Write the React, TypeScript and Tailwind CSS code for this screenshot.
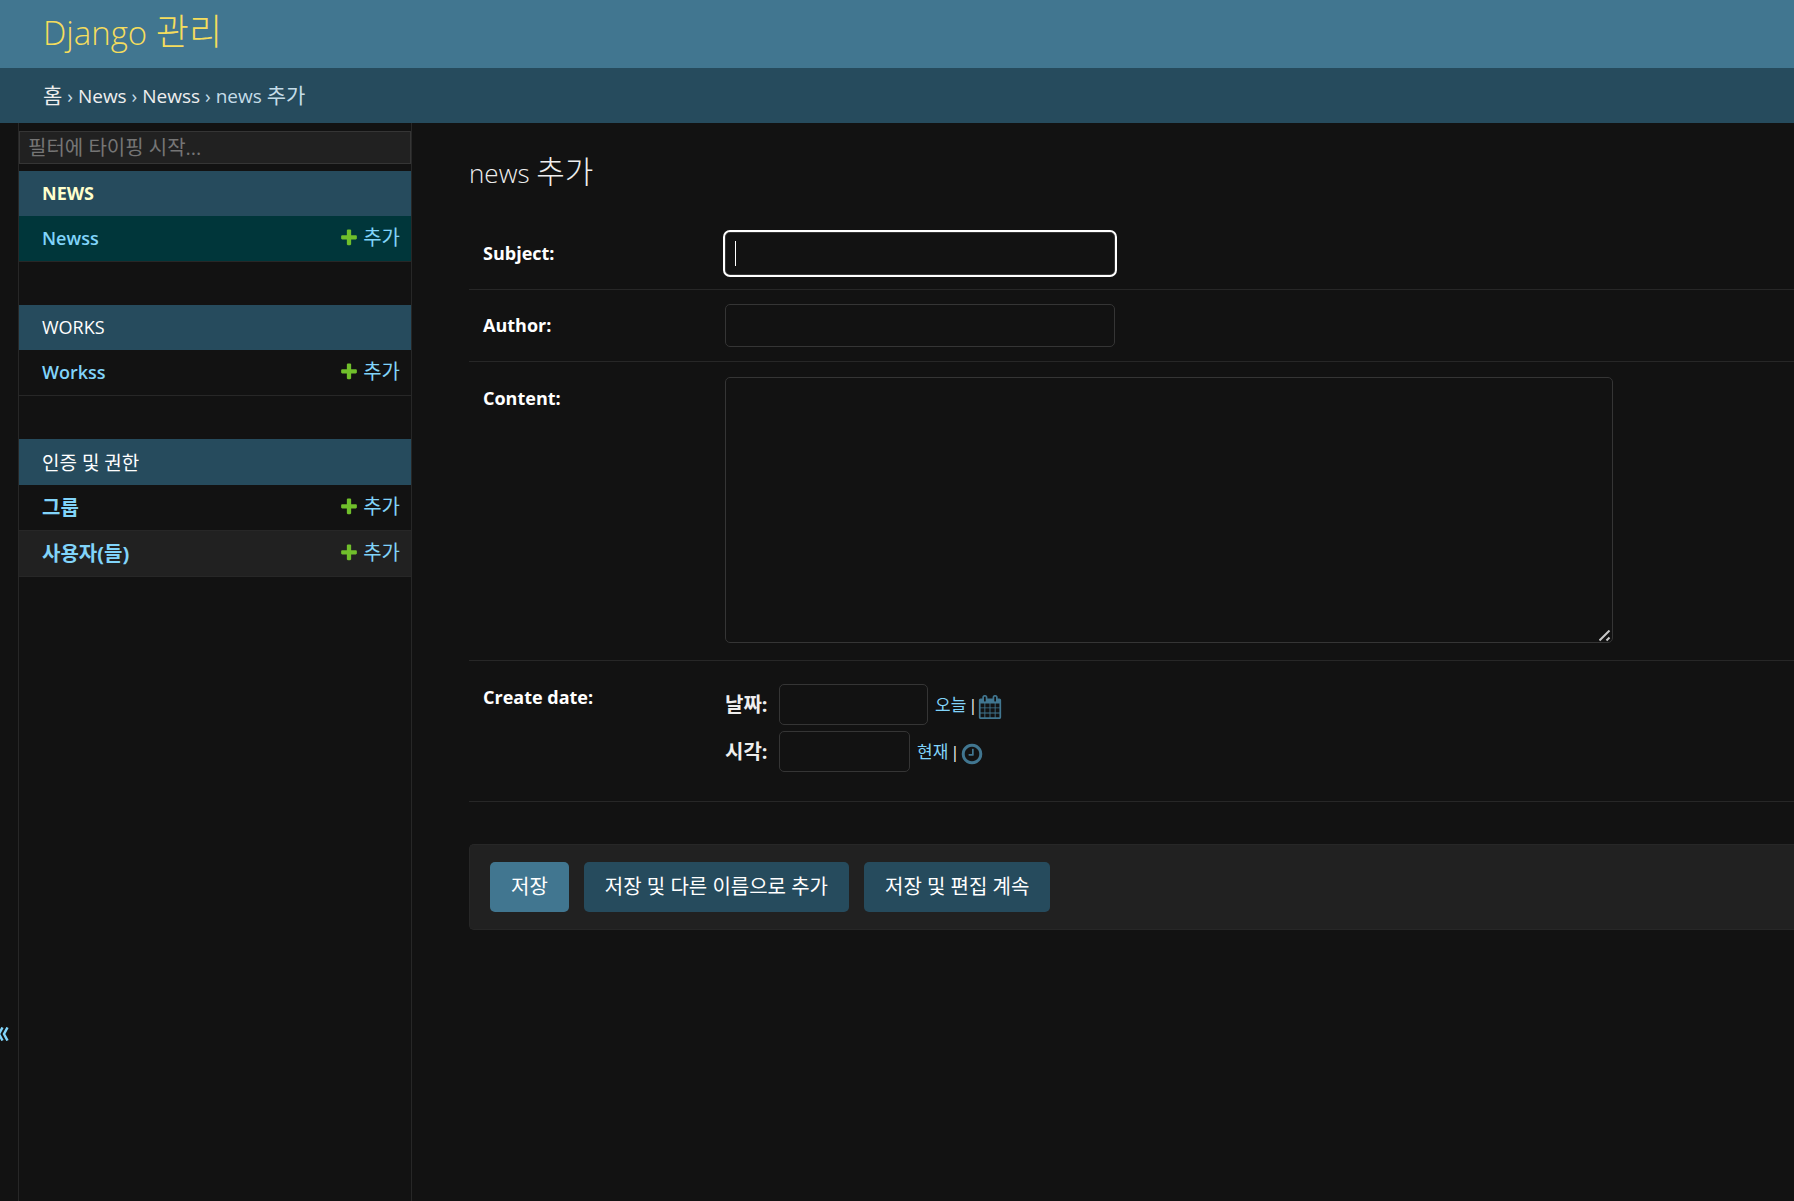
import clsx from 'clsx';

const ADD_PATH =
  'M1600 736v192q0 40-28 68t-68 28h-416v416q0 40-28 68t-68 28h-192q-40 0-68-28t-28-68v-416h-416q-40 0-68-28t-28-68v-192q0-40 28-68t68-28h416v-416q0-40 28-68t68-28h192q40 0 68 28t28 68v416h416q40 0 68 28t28 68z';
const CALENDAR_PATH =
  'M192 1664h288v-288h-288v288zm352 0h320v-288h-320v288zm-352-352h288v-320h-288v320zm352 0h320v-320h-320v320zm-352-384h288v-288h-288v288zm736 736h320v-288h-320v288zm-384-736h320v-288h-320v288zm768 736h288v-288h-288v288zm-384-352h320v-320h-320v320zm-352-864v-288q0-13-9.5-22.5t-22.5-9.5h-64q-13 0-22.5 9.5t-9.5 22.5v288q0 13 9.5 22.5t22.5 9.5h64q13 0 22.5-9.5t9.5-22.5zm736 864h288v-320h-288v320zm-384-384h320v-288h-320v288zm384 0h288v-288h-288v288zm32-480v-288q0-13-9.5-22.5t-22.5-9.5h-64q-13 0-22.5 9.5t-9.5 22.5v288q0 13 9.5 22.5t22.5 9.5h64q13 0 22.5-9.5t9.5-22.5zm384-64v1280q0 52-38 90t-90 38h-1408q-52 0-90-38t-38-90v-1280q0-52 38-90t90-38h128v-96q0-66 47-113t113-47h64q66 0 113 47t47 113v96h384v-96q0-66 47-113t113-47h64q66 0 113 47t47 113v96h128q52 0 90 38t38 90z';
const CLOCK_PATH =
  'M1024 544v448q0 14-9 23t-23 9h-320q-14 0-23-9t-9-23v-64q0-14 9-23t23-9h224v-352q0-14 9-23t23-9h64q14 0 23 9t9 23zm416 352q0-148-73-273t-198-198-273-73-273 73-198 198-73 273 73 273 198 198 273 73 273-73 198-198 73-273zm224 0q0 209-103 385.5t-279.5 279.5-385.5 103-385.5-103-279.5-279.5-103-385.5 103-385.5 279.5-279.5 385.5-103 385.5 103 279.5 279.5 103 385.5z';

interface Model {
  name: string;
  korean?: boolean;
  current?: boolean;
  striped?: boolean;
}

interface AppGroup {
  name: string;
  korean?: boolean;
  current?: boolean;
  models: Model[];
}

const apps: AppGroup[] = [
  { name: 'NEWS', current: true, models: [{ name: 'Newss', current: true }] },
  { name: 'WORKS', models: [{ name: 'Workss' }] },
  {
    name: '인증 및 권한',
    korean: true,
    models: [
      { name: '그룹', korean: true },
      { name: '사용자(들)', korean: true, striped: true },
    ],
  },
];

function Icon({ path, className }: { path: string; className: string }) {
  return (
    <svg viewBox="0 0 1792 1792" fill="currentColor" aria-hidden="true" className={className}>
      <path d={path} />
    </svg>
  );
}

function AppTable({ app }: { app: AppGroup }) {
  return (
    <table className="mb-[43px] w-full border-separate border-spacing-0">
      <caption
        className={clsx(
          'bg-[#264b5d] pl-[23px] text-left',
          app.korean ? 'h-[46px] text-[19px] leading-[48px]' : 'h-[45px] text-[18px] leading-[45px]',
        )}
      >
        <a href="#" className={app.current ? 'font-bold text-[#ffffcc]' : 'text-white'}>
          {app.name}
        </a>
      </caption>
      <tbody>
        {app.models.map((model) => (
          <tr
            key={model.name}
            className={clsx(model.current && 'bg-[#00363a]', model.striped && 'bg-[#212121]')}
          >
            <th
              scope="row"
              className={clsx(
                'h-[46px] border-b border-[#272727] py-0 pl-[23px] text-left',
                model.korean ? 'text-[20px] font-bold' : 'text-[18px] font-semibold',
              )}
            >
              <a href="#">{model.name}</a>
            </th>
            <td className="h-[46px] border-b border-[#272727] pt-0 pr-[11px] pb-[2px] text-[20px]">
              <a href="#" className="flex items-center justify-end gap-1">
                <Icon path={ADD_PATH} className="size-5 text-[#70bf2b]" />
                추가
              </a>
            </td>
          </tr>
        ))}
      </tbody>
    </table>
  );
}

function Sidebar() {
  return (
    <nav aria-label="Sidebar" className="w-[393px] shrink-0 border-r border-[#272727] text-[#81d4fa]">
      <input
        type="search"
        aria-label="필터"
        placeholder="필터에 타이핑 시작..."
        className="mt-2 mb-[7px] block h-[33px] w-full border border-[#353535] bg-[#212121] px-2 text-[20px] text-[#eeeeee] placeholder:text-[#757575]"
      />
      {apps.map((app) => (
        <AppTable key={app.name} app={app} />
      ))}
    </nav>
  );
}

const fieldClass = 'block rounded-[5px] border border-[#353535] bg-[#121212] px-2 text-[18px] text-[#eeeeee]';
const rowClass = 'flex border-b border-[#272727] pl-[14px]';
const labelClass = 'w-[242px] shrink-0 text-[18px] leading-[43px] font-bold text-white';
const submitClass = 'h-[50px] rounded-[5px] px-[21px] text-[20px] text-white';

export default function App() {
  return (
    <div className="flex min-h-screen flex-col overflow-x-hidden bg-[#121212] font-['Open_Sans','Noto_Sans_CJK_KR',sans-serif] text-[#eeeeee] [color-scheme:dark]">
      <header className="h-[68px] bg-[#417690] pl-[43px]">
        <h1 className="text-[33px] leading-[63px] font-light text-[#f5dd5d]">
          <a href="#">
            Django <span className="text-[36px]">관리</span>
          </a>
        </h1>
      </header>
      <nav
        aria-label="Breadcrumbs"
        className="h-[55px] bg-[#264b5d] pl-[43px] text-[19px] leading-[55px] text-[#c4dce8]"
      >
        <a href="#" className="text-[21px] text-[#eeeeee]">홈</a> ›{' '}
        <a href="#" className="text-[#eeeeee]">News</a> ›{' '}
        <a href="#" className="text-[#eeeeee]">Newss</a> › news <span className="text-[21px]">추가</span>
      </nav>

      <div className="flex flex-1">
        <button
          type="button"
          aria-label="Toggle navigation"
          className="flex w-[19px] shrink-0 items-end border-r border-[#272727] pb-40 text-[#81d4fa]"
        >
          <svg viewBox="0 0 9 14" fill="none" stroke="currentColor" strokeWidth="2.5" className="h-[14px] w-[9px]">
            <path d="M2.5 0.5L-1 7L2.5 13.5M7.5 0.5L4 7L7.5 13.5" />
          </svg>
        </button>
        <Sidebar />

        <main className="min-w-0 flex-1 pt-[30px] pl-[57px]">
          <h2 className="mb-[27px] text-[26px] leading-9 font-light">
            news <span className="text-[31px]">추가</span>
          </h2>
          <form onSubmit={(event) => event.preventDefault()}>
            <div className={clsx(rowClass, 'py-[14px]')}>
              <label htmlFor="subject" className={labelClass}>Subject:</label>
              <div className="relative">
                <input
                  id="subject"
                  type="text"
                  autoFocus
                  className={clsx(fieldClass, 'h-[43px] w-[390px] caret-transparent outline-2 outline-white')}
                />
                <span className="pointer-events-none absolute top-[9px] left-[10px] h-[25px] w-px bg-white" />
              </div>
            </div>
            <div className={clsx(rowClass, 'py-[14px]')}>
              <label htmlFor="author" className={labelClass}>Author:</label>
              <input id="author" type="text" className={clsx(fieldClass, 'h-[43px] w-[390px]')} />
            </div>
            <div className={clsx(rowClass, 'pt-[15px] pb-[17px]')}>
              <label htmlFor="content" className={labelClass}>Content:</label>
              <div className="relative">
                <textarea id="content" className={clsx(fieldClass, 'h-[266px] w-[888px] resize-none')} />
                <svg
                  viewBox="0 0 12 12"
                  stroke="#c8c8c8"
                  strokeWidth="2"
                  className="pointer-events-none absolute right-[2px] bottom-[1px] size-3"
                >
                  <path d="M0.5 10.5L10.5 0.5M7.5 10.5L10.5 7.5" />
                </svg>
              </div>
            </div>
            <fieldset className={clsx(rowClass, 'pt-[15px] pb-[29px]')}>
              <legend className={clsx(labelClass, 'float-left')}>Create date:</legend>
              <div className="flex flex-col gap-[6px] pt-2 text-[17px] text-[#81d4fa]">
                <div className="flex items-center">
                  <label htmlFor="date" className="w-[54px] text-[20px] font-bold text-[#eeeeee]">날짜:</label>
                  <input id="date" type="text" className={clsx(fieldClass, 'h-[41px] w-[149px]')} />
                  <a href="#" className="ml-[7px]">오늘</a>
                  <span className="ml-[2px] text-[#eeeeee]">|</span>
                  <a href="#" aria-label="달력" className="pt-1">
                    <Icon path={CALENDAR_PATH} className="size-6 text-[#417690]" />
                  </a>
                </div>
                <div className="flex items-center">
                  <label htmlFor="time" className="w-[54px] text-[20px] font-bold text-[#eeeeee]">시각:</label>
                  <input id="time" type="text" className={clsx(fieldClass, 'h-[41px] w-[131px]')} />
                  <a href="#" className="ml-[7px]">현재</a>
                  <span className="ml-[2px] text-[#eeeeee]">|</span>
                  <a href="#" aria-label="시계" className="pt-1">
                    <Icon path={CLOCK_PATH} className="size-6 text-[#417690]" />
                  </a>
                </div>
              </div>
            </fieldset>
            <div className="mt-[42px] flex gap-[15px] rounded-l-[5px] border border-r-0 border-[#272727] bg-[#212121] px-5 py-[17px]">
              <button type="submit" className={clsx(submitClass, 'bg-[#417690]')}>저장</button>
              <button type="submit" className={clsx(submitClass, 'bg-[#264b5d]')}>저장 및 다른 이름으로 추가</button>
              <button type="submit" className={clsx(submitClass, 'bg-[#264b5d]')}>저장 및 편집 계속</button>
            </div>
          </form>
        </main>
      </div>
    </div>
  );
}
